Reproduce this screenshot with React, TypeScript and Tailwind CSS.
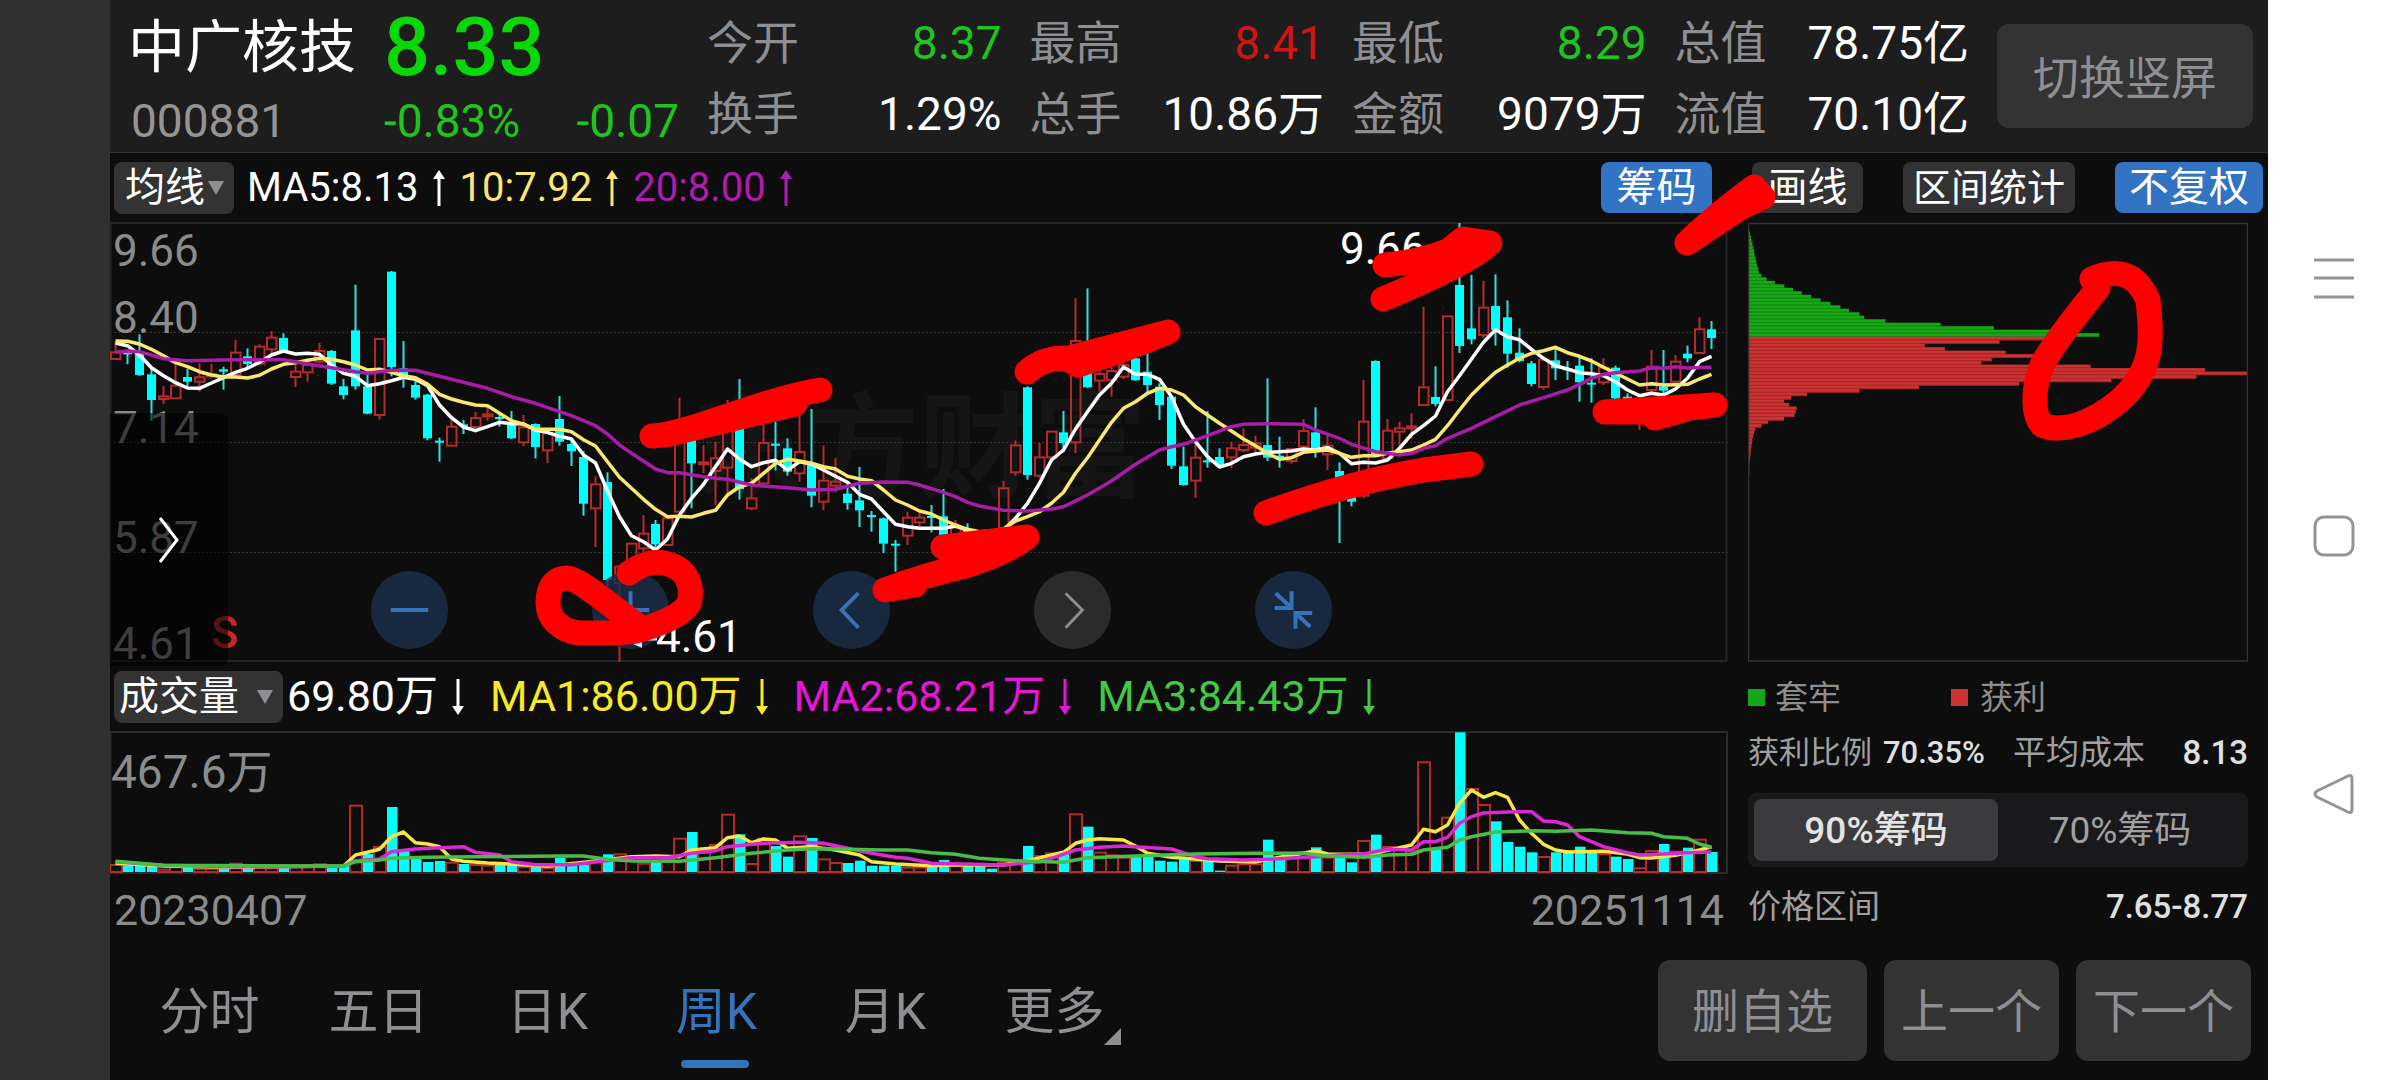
import React from 'react'

type Candle = [high: number, top: number, bottom: number, low: number, up: 0 | 1]
type Point = [index: number, value: number]

const STEP = 12
const FIRST = 5.5
const xAt = (i: number) => FIRST + STEP * i
const priceY = (v: number) => v / 3 - 7
const volumeY = (v: number) => v / 3 - 71

const candles: Candle[] = [
  [380, 412, 432, 432, 1], [405, 412, 417, 448, 0], [358, 412, 480, 483, 0], [462, 478, 555, 617, 0],
  [514, 544, 552, 568, 1], [447, 512, 550, 550, 1], [462, 486, 500, 514, 0], [445, 487, 500, 530, 1],
  [447, 478, 484, 490, 1], [455, 463, 470, 524, 0], [374, 413, 480, 484, 1], [400, 424, 447, 458, 0],
  [388, 395, 446, 452, 1], [348, 368, 403, 418, 1], [355, 369, 407, 410, 0], [450, 470, 486, 516, 1],
  [440, 450, 472, 500, 1], [384, 408, 440, 445, 1], [405, 408, 506, 510, 0], [492, 514, 540, 553, 0],
  [209, 346, 514, 524, 0], [480, 514, 596, 598, 0], [370, 372, 600, 614, 1], [168, 170, 456, 484, 0],
  [378, 460, 486, 518, 0], [490, 510, 548, 554, 0], [537, 539, 670, 676, 0], [668, 677, 682, 740, 0],
  [610, 635, 692, 695, 1], [615, 628, 633, 657, 0], [590, 609, 636, 640, 1], [570, 598, 604, 617, 1],
  [595, 606, 612, 635, 0], [588, 622, 670, 672, 0], [600, 637, 682, 694, 1], [625, 627, 696, 730, 0],
  [645, 655, 706, 745, 1], [543, 612, 680, 692, 0], [668, 687, 709, 753, 0], [708, 726, 866, 902, 0],
  [784, 808, 880, 996, 1], [772, 801, 1095, 1115, 0], [1050, 1055, 1104, 1340, 1], [985, 986, 1050, 1080, 1],
  [900, 956, 1000, 1010, 1], [915, 927, 988, 1010, 0], [905, 910, 990, 992, 1], [548, 660, 890, 892, 1],
  [660, 670, 745, 880, 0], [690, 742, 748, 775, 1], [680, 730, 768, 870, 1], [555, 640, 758, 835, 1],
  [492, 620, 822, 854, 0], [790, 850, 880, 886, 1], [620, 684, 805, 808, 1], [620, 686, 692, 766, 0],
  [670, 700, 770, 782, 0], [600, 711, 775, 800, 1], [582, 745, 842, 877, 0], [692, 797, 860, 886, 1],
  [730, 800, 812, 832, 1], [800, 836, 864, 884, 0], [756, 856, 886, 936, 0], [888, 900, 906, 950, 0],
  [908, 910, 986, 1014, 0], [975, 986, 992, 1070, 0], [890, 908, 962, 990, 1], [890, 908, 922, 935, 1],
  [870, 903, 908, 952, 0], [822, 904, 960, 965, 0], [915, 938, 965, 970, 1], [925, 945, 965, 975, 0],
  [950, 960, 985, 990, 0], [950, 955, 980, 990, 0], [798, 820, 945, 950, 1], [676, 691, 772, 782, 1],
  [514, 517, 780, 794, 0], [684, 727, 782, 790, 1], [648, 650, 727, 740, 1], [588, 652, 684, 712, 0],
  [250, 378, 682, 714, 1], [220, 380, 517, 519, 0], [440, 477, 497, 530, 1], [450, 468, 495, 545, 1],
  [440, 450, 485, 492, 1], [425, 430, 496, 498, 0], [415, 470, 510, 532, 0], [505, 515, 570, 615, 0],
  [540, 545, 752, 762, 0], [695, 754, 810, 812, 0], [670, 728, 797, 848, 1], [588, 736, 742, 758, 0],
  [700, 726, 752, 758, 0], [680, 700, 727, 760, 1], [640, 690, 705, 712, 1], [662, 685, 698, 715, 1],
  [490, 690, 728, 738, 0], [665, 722, 730, 758, 0], [698, 702, 738, 746, 1], [612, 648, 695, 700, 1],
  [577, 652, 702, 728, 0], [655, 692, 718, 765, 1], [742, 768, 790, 984, 0], [790, 800, 860, 874, 0],
  [494, 620, 842, 850, 1], [436, 438, 718, 722, 0], [612, 647, 730, 735, 1], [620, 640, 650, 695, 1],
  [595, 634, 639, 672, 1], [275, 517, 570, 574, 1], [454, 546, 567, 574, 0], [303, 304, 555, 557, 1],
  [24, 210, 393, 414, 0], [180, 340, 373, 388, 0], [197, 278, 360, 370, 1], [178, 273, 345, 392, 0],
  [256, 307, 416, 458, 0], [340, 413, 438, 442, 0], [438, 445, 507, 514, 0], [430, 434, 516, 524, 1],
  [393, 436, 460, 495, 0], [438, 460, 466, 495, 0], [425, 452, 502, 560, 0], [430, 503, 509, 563, 0],
  [430, 458, 502, 510, 1], [452, 458, 550, 555, 0], [535, 545, 560, 600, 0], [560, 570, 620, 644, 1],
  [405, 455, 525, 540, 1], [405, 515, 527, 545, 0], [420, 440, 500, 505, 1], [392, 416, 430, 442, 0],
  [307, 343, 414, 418, 1], [318, 343, 369, 402, 0],
]

const ma5 = [
  384, 392, 420, 458, 482, 503, 519, 520, 504, 488, 472, 460, 442, 420, 408, 417, 415, 418, 450, 475, 484, 512, 506,
  497, 487, 493, 512, 570, 608, 636, 647, 635, 622, 626, 626, 646, 652, 664, 672, 720, 744, 828, 905, 962, 980, 1005,
  972, 900, 850, 808, 755, 702, 732, 755, 743, 736, 765, 740, 747, 765, 784, 802, 838, 852, 890, 928, 935, 940, 940,
  940, 933, 945, 955, 960, 945, 910, 865, 805, 735, 705, 642, 590, 540, 505, 456, 478, 478, 493, 545, 628, 680, 725,
  756, 745, 725, 717, 712, 710, 708, 702, 705, 698, 715, 746, 742, 744, 735, 700, 658, 632, 603, 530, 482, 432, 382,
  344, 365, 374, 403, 430, 452, 462, 473, 476, 482, 500, 525, 542, 535, 540, 522, 490, 440, 424,
]

const ma10 = [
  378, 379, 387, 403, 422, 443, 455, 470, 480, 486, 486, 489, 481, 462, 448, 443, 436, 430, 433, 440, 450, 465, 463,
  472, 482, 488, 507, 538, 552, 562, 570, 572, 595, 617, 628, 643, 643, 643, 650, 674, 693, 740, 787, 820, 853, 883,
  905, 904, 906, 895, 886, 840, 815, 805, 775, 745, 733, 738, 745, 755, 762, 784, 792, 797, 825, 855, 870, 888, 897,
  915, 930, 943, 950, 948, 942, 918, 905, 890, 865, 832, 775, 728, 675, 622, 580, 560, 535, 520, 525, 540, 575, 600,
  625, 648, 672, 692, 715, 733, 728, 712, 708, 705, 715, 727, 722, 722, 715, 710, 705, 690, 673, 632, 585, 540, 505,
  472, 450, 430, 415, 407, 397, 413, 424, 438, 457, 475, 492, 510, 506, 510, 509, 508, 492, 478,
]

const ma20: Point[] = [
  [0, 412], [1, 408], [2, 410], [3, 420], [4, 431], [6, 437], [8, 436], [10, 434], [14, 434], [16, 447], [18, 458],
  [20, 470], [21, 475], [23, 466], [25, 466], [27, 484], [29, 502], [31, 520], [33, 545], [35, 565], [37, 590],
  [38, 602], [39, 617], [40, 632], [41, 657], [42, 690], [43, 715], [45, 762], [46, 773], [47, 773], [49, 785],
  [50, 790], [51, 793], [53, 810], [54, 813], [56, 818], [58, 825], [60, 823], [62, 805], [64, 801], [66, 802],
  [67, 810], [69, 832], [70, 845], [71, 862], [72, 873], [74, 886], [76, 888], [78, 882], [79, 875], [81, 840],
  [83, 798], [85, 748], [87, 705], [88, 695], [89, 688], [91, 662], [93, 635], [94, 628], [96, 626], [99, 628],
  [100, 645], [102, 670], [103, 688], [105, 710], [107, 720], [108, 715], [109, 700], [110, 692], [111, 670],
  [113, 640], [115, 605], [117, 570], [119, 548], [121, 525], [122, 508], [123, 490], [124, 478], [125, 473],
  [127, 468], [128, 458], [129, 460], [130, 455], [131, 459], [133, 457],
]

const volumes = [
  612, 616, 616, 616, 626, 618, 622, 624, 624, 626, 608, 622, 618, 620, 618, 618, 616, 610, 618, 618, 434, 582, 558,
  441, 572, 590, 606, 603, 605, 612, 612, 614, 612, 612, 618, 618, 622, 593, 615, 614, 600, 583, 580, 600, 608, 604,
  595, 533, 516, 575, 552, 461, 523, 609, 533, 558, 590, 526, 534, 595, 606, 609, 602, 617, 617, 617, 620, 620, 620,
  600, 615, 610, 612, 626, 605, 605, 558, 585, 577, 580, 460, 500, 575, 583, 590, 585, 590, 602, 605, 598, 600, 600,
  632, 614, 610, 610, 539, 590, 590, 573, 562, 590, 592, 607, 540, 524, 558, 562, 570, 304, 565, 470, 217, 384, 432,
  484, 546, 560, 577, 588, 577, 572, 560, 572, 580, 590, 597, 622, 570, 552, 572, 563, 536, 576,
]

/* Weeks whose volume bar takes the opposite colour of the candle. */
const flippedVolume = new Set([20, 113])

const volumeMa1: Point[] = [
  [0, 610], [4, 618], [10, 622], [19, 618], [20, 585], [21, 577], [22, 568], [23, 530], [24, 516], [25, 548],
  [26, 552], [27, 560], [28, 597], [29, 604], [31, 609], [34, 614], [36, 619], [40, 603], [43, 590], [45, 588],
  [47, 590], [48, 570], [50, 563], [51, 533], [52, 528], [53, 548], [54, 537], [55, 540], [56, 565], [58, 560],
  [60, 570], [62, 585], [63, 605], [65, 612], [68, 617], [70, 614], [74, 615], [76, 602], [78, 585], [79, 577],
  [80, 550], [81, 540], [82, 536], [84, 540], [85, 558], [86, 580], [88, 592], [90, 597], [92, 603], [95, 606],
  [97, 592], [99, 580], [100, 572], [101, 582], [104, 583], [105, 578], [107, 563], [108, 555], [109, 508],
  [110, 515], [111, 495], [112, 430], [113, 390], [114, 412], [115, 398], [116, 412], [117, 480], [118, 520],
  [119, 553], [120, 570], [121, 576], [124, 574], [126, 582], [127, 593], [128, 594], [130, 586], [132, 570],
  [133, 560],
]

const volumeMa2: Point[] = [
  [0, 605], [4, 616], [10, 620], [19, 619], [20, 602], [22, 597], [23, 575], [25, 567], [27, 563], [29, 560],
  [30, 577], [32, 585], [33, 605], [35, 614], [38, 614], [40, 606], [43, 593], [46, 593], [48, 580], [50, 572],
  [51, 560], [54, 550], [57, 547], [59, 550], [61, 565], [63, 580], [65, 592], [66, 595], [68, 610], [74, 615],
  [77, 605], [78, 595], [80, 570], [82, 562], [84, 558], [88, 567], [90, 590], [91, 596], [94, 600], [96, 598],
  [100, 590], [102, 585], [104, 582], [106, 568], [108, 570], [109, 545], [110, 545], [111, 532], [112, 490],
  [113, 470], [114, 459], [116, 456], [118, 455], [119, 483], [120, 485], [121, 495], [122, 530], [124, 560],
  [126, 578], [127, 585], [129, 582], [131, 578], [133, 576],
]

const volumeMa3: Point[] = [
  [0, 604], [4, 616], [12, 617], [19, 618], [20, 605], [22, 600], [23, 595], [26, 592], [30, 590], [37, 588],
  [39, 588], [41, 598], [43, 603], [47, 604], [50, 593], [53, 580], [56, 570], [58, 566], [60, 567], [64, 570],
  [66, 570], [68, 578], [70, 583], [72, 595], [75, 602], [79, 607], [81, 593], [85, 588], [90, 582], [95, 580],
  [99, 580], [101, 588], [104, 592], [106, 585], [108, 583], [109, 570], [111, 562], [112, 540], [113, 530],
  [115, 516], [118, 512], [120, 514], [123, 510], [126, 518], [128, 520], [129, 530], [131, 535], [132, 552],
  [133, 562],
]

const TRAPPED_ROWS = 32
const chips = [
  1, 3, 5, 7, 8, 10, 12, 14, 15, 17, 19, 21, 23, 25, 31, 43, 62, 84, 104, 124, 146, 167, 190, 213, 233, 257, 268, 317,
  444, 567, 700, 810, 690, 580, 408, 454, 594, 665, 562, 538, 790, 1054, 1152, 1034, 838, 625, 394, 257, 136, 100, 83,
  95, 112, 110, 107, 83, 46, 31, 17, 14, 12, 10, 9, 8, 7, 6, 5, 4, 3, 3, 3, 3, 2, 2, 2, 2, 2, 1, 1, 1, 1, 1, 1, 1, 1,
]

const indexed = (values: number[]): Point[] => values.map((v, i) => [i, v])

function Line({ data, y, color }: { data: Point[]; y: (v: number) => number; color: string }) {
  return (
    <polyline
      points={data.map(([i, v]) => `${xAt(i)},${y(v).toFixed(1)}`).join(' ')}
      fill="none"
      stroke={color}
      strokeWidth="3.5"
      strokeLinejoin="round"
    />
  )
}

function PriceChart() {
  return (
    <svg viewBox="0 0 1618 440" preserveAspectRatio="none" className="block h-[440px] w-full overflow-visible" role="img" aria-label="周K线图">
      <text x="581" y="266" fontSize="114" fontWeight="700" fill="#151515">东方财富</text>
      {[110, 220, 330].map((y) => (
        <line key={y} x1="0" x2="1618" y1={y + 0.5} y2={y + 0.5} stroke="#363636" strokeWidth="1" strokeDasharray="2 2" />
      ))}
      <rect x="0.5" y="1" width="1616" height="438" fill="none" stroke="#242424" strokeWidth="2" />
      <g fill="#8b8b8b" fontSize="44">
        <text x="3" y="44">9.66</text>
        <text x="3" y="111">8.40</text>
        <text x="3" y="221">7.14</text>
        <text x="3" y="331">5.87</text>
        <text x="3" y="437">4.61</text>
      </g>
      {candles.map(([high, top, bottom, low, up], i) => {
        const x = xAt(i)
        const h = Math.max((bottom - top) / 3, 2)
        return up ? (
          <g key={i} stroke="#b32b2b" strokeWidth="2" fill="none">
            <path d={`M${x} ${priceY(high)}V${priceY(top)}M${x} ${priceY(bottom)}V${priceY(low)}`} />
            <rect x={x - 4.5} y={priceY(top)} width="9.5" height={h} />
          </g>
        ) : (
          <g key={i}>
            <line x1={x} x2={x} y1={priceY(high)} y2={priceY(low)} stroke="#35dede" strokeWidth="2" />
            <rect x={x - 4.5} y={priceY(top)} width="9" height={h} fill="#00ffff" />
          </g>
        )
      })}
      <Line data={indexed(ma5)} y={priceY} color="#ffffff" />
      <Line data={indexed(ma10)} y={priceY} color="#fbe870" />
      <Line data={ma20} y={priceY} color="#a81ca8" />
      <text x="101" y="426" fontSize="45" fontWeight="500" fill="#c42828">S</text>
      <text x="1230" y="42" fontSize="44" fill="#ffffff">9.66</text>
    </svg>
  )
}

function LowestLabel() {
  return (
    <svg viewBox="0 0 1618 440" preserveAspectRatio="none" className="pointer-events-none absolute inset-0 h-full w-full overflow-visible" aria-hidden="true">
      <path d="M512 417 532 408V426Z" fill="#d8dcee" />
      <path d="M530 417H547" stroke="#e8eaf6" strokeWidth="3" />
      <text x="546" y="430" fontSize="44" fill="#ffffff">4.61</text>
    </svg>
  )
}

function VolumeChart() {
  return (
    <svg viewBox="0 0 1618 143" preserveAspectRatio="none" className="block h-[143px] w-full" role="img" aria-label="成交量图">
      <rect x="0.5" y="1" width="1616.5" height="141" fill="none" stroke="#2a2a2a" strokeWidth="2" />
      <text x="1" y="57" fontSize="46" fill="#8b8b8b">467.6万</text>
      {volumes.map((v, i) => {
        const x = xAt(i)
        const y = volumeY(v)
        const red = flippedVolume.has(i) ? true : candles[i][4] === 1
        return red ? (
          <rect key={i} x={x - 5.5} y={y + 1} width="12" height={Math.max(140 - y, 1)} fill="none" stroke="#b32b2b" strokeWidth="2" />
        ) : (
          <rect key={i} x={x - 4.5} y={y} width="10.5" height={141 - y} fill="#00ffff" />
        )
      })}
      <Line data={volumeMa1} y={volumeY} color="#f7e645" />
      <Line data={volumeMa2} y={volumeY} color="#dc28d2" />
      <Line data={volumeMa3} y={volumeY} color="#48bd48" />
    </svg>
  )
}

function ChipChart() {
  return (
    <svg viewBox="0 0 500 440" preserveAspectRatio="none" className="block h-[440px] w-full" role="img" aria-label="筹码分布">
      {chips.map((w, i) => {
        const y = 3 + i * 3.49
        const trapped = i < TRAPPED_ROWS
        return (
          <g key={i}>
            <rect x="0" y={y} width={w / 2.306} height="3.6" fill={trapped ? '#17a616' : '#cb3232'} />
            <rect x="0" y={y + 2.8} width={w / 2.306} height="0.8" fill={trapped ? '#128011' : '#9c2020'} />
          </g>
        )
      })}
      <rect x="0.5" y="1.5" width="499" height="437.5" fill="none" stroke="#323232" strokeWidth="1.5" />
    </svg>
  )
}

function Trend({ up = false }: { up?: boolean }) {
  return (
    <svg width="12" height="36" viewBox="0 0 12 36" className={up ? 'shrink-0' : 'shrink-0 rotate-180'} aria-hidden="true">
      <path d="M6 6V36" stroke="currentColor" strokeWidth="3" />
      <path d="M6 0 12 9H0Z" fill="currentColor" />
    </svg>
  )
}

function Picker({ label, options, className }: { label: string; options: string[]; className: string }) {
  return (
    <div className="relative">
      <select
        aria-label={label}
        className={`h-[52px] appearance-none rounded-lg bg-[#333333] text-[40px] leading-[52px] text-white ${className}`}
      >
        {options.map((o) => (
          <option key={o}>{o}</option>
        ))}
      </select>
      <svg width="16" height="14" viewBox="0 0 16 14" className="pointer-events-none absolute top-[19px] right-[10px]" aria-hidden="true">
        <path d="M0 0H16L8 14Z" fill="#8e8e93" />
      </svg>
    </div>
  )
}

const stats = [
  { label: '今开', value: '8.37', tone: 'text-[#1fc41f]' },
  { label: '最高', value: '8.41', tone: 'text-[#cf1414]' },
  { label: '最低', value: '8.29', tone: 'text-[#1fc41f]' },
  { label: '总值', value: '78.75亿', tone: 'text-white' },
  { label: '换手', value: '1.29%', tone: 'text-white' },
  { label: '总手', value: '10.86万', tone: 'text-white' },
  { label: '金额', value: '9079万', tone: 'text-white' },
  { label: '流值', value: '70.10亿', tone: 'text-white' },
]

function Header() {
  return (
    <header className="flex h-[153px] border-b border-[#333333] bg-[#1d1d1d]">
      <div className="grid w-[597px] shrink-0 grid-cols-[256px_1fr] grid-rows-[94px_54px] items-center pr-[28px] pl-[18px] leading-none">
        <h1 className="text-[57px] text-white">中广核技</h1>
        <div className="text-[81px] font-medium text-[#08d808]">8.33</div>
        <div className="pl-[3px] text-[46px] text-[#949494]">000881</div>
        <div className="flex justify-between text-[46px] text-[#1fc41f]">
          <span>-0.83%</span>
          <span>-0.07</span>
        </div>
      </div>
      <dl className="grid flex-1 grid-cols-4 grid-rows-[71px_71px] gap-x-[28px] pt-[8px] text-[46px] leading-[71px]">
        {stats.map((s) => (
          <div key={s.label} className="flex justify-between whitespace-nowrap">
            <dt className="text-[#8e8e93]">{s.label}</dt>
            <dd className={s.tone}>{s.value}</dd>
          </div>
        ))}
      </dl>
      <button className="mt-6 mr-[15px] ml-[28px] h-[104px] w-[256px] rounded-xl bg-[#333333] pt-1 text-[46px] leading-none text-[#8e8e93]">
        切换竖屏
      </button>
    </header>
  )
}

function Toolbar() {
  return (
    <div className="flex h-[69px] items-center pl-1">
      <Picker label="均线" options={['均线', 'BOLL']} className="w-[120px] pl-[11px]" />
      <div className="ml-[13px] flex items-center gap-[15px] text-[40px] leading-none">
        <span className="flex items-center gap-[14px] text-white">MA5:8.13 <Trend up /></span>
        <span className="flex items-center gap-[14px] text-[#fbe870]">10:7.92 <Trend up /></span>
        <span className="flex items-center gap-[14px] text-[#b01cb0]">20:8.00 <Trend up /></span>
      </div>
      <div className="mr-[5px] ml-auto flex items-center gap-10 text-[40px] leading-none text-white">
        <button className="h-[51px] w-[111px] rounded-lg bg-[#3274c3]">筹码</button>
        <button className="h-[51px] w-[111px] rounded-lg bg-[#333333]">画线</button>
        <button className="h-[51px] w-[172px] rounded-lg bg-[#333333] text-[38px]">区间统计</button>
        <button className="h-[51px] w-[148px] rounded-lg bg-[#3274c3]">不复权</button>
      </div>
    </div>
  )
}

const controls = [
  { label: '缩小', d: 'M20 39H58', muted: false, width: 4 },
  { label: '放大', d: 'M20 39H58M39 20V58', muted: false, width: 4 },
  { label: '向左', d: 'M46 22 29 39 46 57', muted: false, width: 4 },
  { label: '向右', d: 'M32 22 49 39 32 57', muted: true, width: 3 },
  { label: '收起', d: 'M21 22 36 36M37 20V37H20M56 56 42 43M41 58V42H58', muted: false, width: 4 },
]

function ChartControls() {
  return (
    <div className="absolute bottom-[13px] left-[261px] flex gap-[144px]">
      {controls.map((c) => (
        <button
          key={c.label}
          aria-label={c.label}
          className={`h-[78px] w-[77px] rounded-full ${c.muted ? 'bg-[#2d2d2d]/95 text-[#8e8e8e]' : 'bg-[#1b2e48]/85 text-[#3573ba]'}`}
        >
          <svg viewBox="0 0 78 78" className="h-full w-full" aria-hidden="true">
            <path d={c.d} fill="none" stroke="currentColor" strokeWidth={c.width} />
          </svg>
        </button>
      ))}
    </div>
  )
}

function ChipPanel() {
  return (
    <aside className="mx-5 w-[500px] shrink-0 leading-none whitespace-nowrap text-[#a0a0a0]">
      <ChipChart />
      <div className="flex h-[70px] items-center text-[33px] text-[#8e8e8e]">
        <span className="mr-[10px] h-[17px] w-[17px] bg-[#17a616]" />
        套牢
        <span className="mr-[12px] ml-[110px] h-[17px] w-[17px] bg-[#cb3232]" />
        获利
      </div>
      <div className="flex h-[41px] items-center justify-between text-[33px]">
        <span className="flex items-center gap-[11px] text-[31px]">
          获利比例 <b className="font-medium text-[#e0e0e0]">70.35%</b>
        </span>
        <span className="ml-[28px]">平均成本</span>
        <b className="ml-auto font-medium text-[#e0e0e0]">8.13</b>
      </div>
      <div className="mt-5 flex h-[74px] rounded-lg bg-[#19191b] p-[6px] text-[37px]">
        <button className="flex-1 rounded-lg bg-[#3b3b3d] font-medium text-[#e4e4e4]">90%筹码</button>
        <button className="flex-1 rounded-lg">70%筹码</button>
      </div>
      <div className="flex h-[78px] items-center justify-between text-[33px]">
        <span>价格区间</span>
        <b className="font-medium text-[#e0e0e0]">7.65-8.77</b>
      </div>
    </aside>
  )
}

const tabs = ['分时', '五日', '日K', '周K', '月K', '更多']

function Footer() {
  return (
    <footer className="flex h-[132px] items-start justify-between pr-[17px] pl-[15px] leading-none text-[#8e8e93]">
      <nav className="flex h-full">
        {tabs.map((t) => (
          <button
            key={t}
            className={`relative h-full w-[169px] text-[50px] ${t === '周K' ? 'text-[#3573ba]' : ''}`}
          >
            {t}
            {t === '周K' && <span className="absolute bottom-[10px] left-[49px] h-2 w-[68px] rounded-full bg-[#3573ba]" />}
            {t === '更多' && (
              <svg width="17" height="17" viewBox="0 0 17 17" className="absolute right-[18px] bottom-[33px]" aria-hidden="true">
                <path d="M17 0V17H0Z" fill="currentColor" />
              </svg>
            )}
          </button>
        ))}
      </nav>
      <div className="mt-[14px] flex gap-[17px] text-[47px]">
        <button className="h-[101px] w-[209px] rounded-xl bg-[#333333] pt-[2px]">删自选</button>
        <button className="h-[101px] w-[175px] rounded-xl bg-[#333333] pt-[2px]">上一个</button>
        <button className="h-[101px] w-[175px] rounded-xl bg-[#333333] pt-[2px]">下一个</button>
      </div>
    </footer>
  )
}

function SystemBar() {
  return (
    <nav className="flex w-[132px] shrink-0 flex-col items-center justify-center bg-white pb-2">
      <button aria-label="菜单" className="flex h-[258px] w-full items-center justify-center">
        <svg width="42" height="42" viewBox="0 0 42 42" aria-hidden="true">
          <path d="M1 3H41M1 21H41M1 40H41" stroke="#949494" strokeWidth="3" />
        </svg>
      </button>
      <button aria-label="主页" className="flex h-[258px] w-full items-center justify-center">
        <svg width="42" height="42" viewBox="0 0 42 42" aria-hidden="true">
          <rect x="2" y="2" width="38" height="38" rx="9" fill="none" stroke="#949494" strokeWidth="3" />
        </svg>
      </button>
      <button aria-label="返回" className="flex h-[258px] w-full items-center justify-center">
        <svg width="42" height="42" viewBox="0 0 42 42" aria-hidden="true">
          <path d="M35 3Q39 1 39 6V36Q39 41 35 39L4 24Q0 21 4 18Z" fill="none" stroke="#949494" strokeWidth="3" />
        </svg>
      </button>
    </nav>
  )
}

const marks = [
  'M652 436C690 434 760 400 820 390M665 435 795 404',
  'M1027 372Q1042 358 1065 358L1078 365Q1120 352 1168 332L1065 359',
  'M943 547 1027 537Q1005 554 965 566 925 575 885 590L915 585M943 547 975 551 1015 543',
  'M629 573C645 562 655 561 664 563C690 568 693 590 689 603C683 615 660 624 643 629C630 634 600 633 580 633C560 631 548 618 548 603C548 585 556 578 567 578C580 578 615 610 641 628',
  'M1385 265Q1420 262 1448 251L1463 239 1490 243Q1470 263 1383 299M1425 267 1480 248',
  'M1266 513Q1350 482 1424 470L1471 464',
  'M1605 412H1650L1655 418 1690 408 1715 405 1605 412',
  'M1687 243Q1712 218 1754 187L1763 197 1740 208 1687 243',
  'M2092 279C2120 267 2137 275 2148 300C2152 340 2155 370 2118 402C2090 425 2060 433 2042 425C2033 415 2032 390 2042 365C2055 340 2085 305 2098 288L2092 279',
]

function Marker() {
  return (
    <svg viewBox="0 0 2400 1080" preserveAspectRatio="none" className="pointer-events-none absolute inset-0 h-full w-full" aria-hidden="true">
      {marks.map((d) => (
        <path key={d} d={d} fill="none" stroke="#ff0000" strokeWidth="25" strokeLinecap="round" strokeLinejoin="round" />
      ))}
    </svg>
  )
}

export default function App() {
  return (
    <div className="relative flex min-h-screen w-full bg-[#0d0d0d] font-[Roboto,'Noto_Sans_CJK_SC',sans-serif]">
      <div className="w-[110px] shrink-0 bg-[#303030]" />
      <main className="min-w-0 flex-1">
        <Header />
        <Toolbar />
        <div className="flex">
          <section className="min-w-0 flex-1">
            <div className="relative">
              <PriceChart />
              <button
                aria-label="展开"
                className="absolute top-[191px] left-0 flex h-[253px] w-[118px] items-center justify-center rounded-r-lg bg-black/55"
              >
                <svg width="20" height="48" viewBox="0 0 20 48" aria-hidden="true">
                  <path d="M1 2 18 24 1 46" fill="none" stroke="#ffffff" strokeWidth="3" />
                </svg>
              </button>
              <ChartControls />
              <LowestLabel />
            </div>
            <div className="flex h-[69px] items-center pl-1 text-[43px] leading-none whitespace-nowrap">
              <Picker label="成交量" options={['成交量', 'MACD']} className="w-[169px] pl-[5px]" />
              <div className="ml-1 flex items-center gap-[26px]">
                <span className="flex items-center gap-[14px] text-white">69.80万 <Trend /></span>
                <span className="flex items-center gap-[14px] text-[#f7ea28]">MA1:86.00万 <Trend /></span>
                <span className="flex items-center gap-[14px] text-[#e815d8]">MA2:68.21万 <Trend /></span>
                <span className="flex items-center gap-[14px] text-[#45c645]">MA3:84.43万 <Trend /></span>
              </div>
            </div>
            <VolumeChart />
            <div className="flex h-[72px] items-center justify-between pr-1 pl-1 text-[43px] leading-none text-[#8b8b8b]">
              <time dateTime="2023-04-07">20230407</time>
              <time dateTime="2025-11-14">20251114</time>
            </div>
          </section>
          <ChipPanel />
        </div>
        <Footer />
      </main>
      <SystemBar />
      <Marker />
    </div>
  )
}
